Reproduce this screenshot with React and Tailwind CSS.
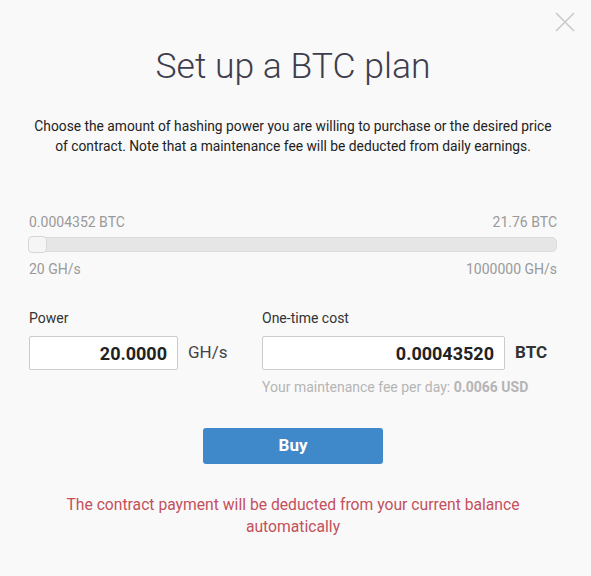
import React from 'react';

function App() {
  return (
    <div className="relative w-[591px] h-[576px] bg-[#f9f9f9] text-[#333] font-[Roboto,'Liberation_Sans',sans-serif]">
      {/* close */}
      <button className="absolute right-[16px] top-[12px] w-[20px] h-[20px] text-[#c8c8c8]">
        <svg width="20" height="20" viewBox="0 0 20 20" fill="none" stroke="currentColor" strokeWidth="1.5">
          <path d="M1 1L19 19M19 1L1 19" />
        </svg>
      </button>

      <div className="flex flex-col pl-[29px] pr-[34px] pt-[42px]">
        <h2 className="text-center text-[35.5px] leading-[48px] font-light text-[#3d3d4c]">Set up a BTC plan</h2>

        <p className="mt-[26px] text-center text-[13.8px] leading-[20px] text-[#222]">
          Choose the amount of hashing power you are willing to purchase or the desired price of contract. Note that a maintenance fee will be deducted from daily earnings.
        </p>

        {/* slider */}
        <div className="mt-[57px] flex flex-col">
          <div className="flex justify-between text-[14px] leading-[18px] text-[#999]">
            <span>0.0004352 BTC</span>
            <span>21.76 BTC</span>
          </div>
          <div className="relative mt-[6px] h-[15px] rounded-[5px] border border-[#dcdcdc] bg-[#e6e6e6]">
            <div className="absolute left-[-2px] top-[-2px] w-[19px] h-[17px] rounded-[4px] border border-[#d6d6d6] bg-[#f5f5f5]" />
          </div>
          <div className="mt-[8px] flex justify-between text-[14px] leading-[18px] text-[#999]">
            <span>20 GH/s</span>
            <span>1000000 GH/s</span>
          </div>
        </div>

        {/* inputs */}
        <div className="mt-[31px] flex">
          <div className="flex flex-col w-[233px]">
            <label className="text-[14px] leading-[18px] text-[#333]">Power</label>
            <div className="mt-[9px] flex items-center">
              <div className="w-[149px] h-[34px] border border-[#ccc] bg-white rounded-[2px] flex items-center justify-end pr-[10px] text-[18px] font-bold text-[#222]">20.0000</div>
              <span className="ml-[10px] text-[17px] text-[#444]">GH/s</span>
            </div>
          </div>
          <div className="flex flex-col">
            <label className="text-[14px] leading-[18px] text-[#333]">One-time cost</label>
            <div className="mt-[9px] flex items-center">
              <div className="w-[243px] h-[34px] border border-[#ccc] bg-white rounded-[2px] flex items-center justify-end pr-[10px] text-[18px] font-bold text-[#222]">0.00043520</div>
              <span className="ml-[10px] text-[17px] font-bold text-[#333]">BTC</span>
            </div>
            <p className="mt-[8px] text-[14px] leading-[18px] text-[#b5b5b5] whitespace-nowrap">
              Your maintenance fee per day: <span className="font-bold">0.0066 USD</span>
            </p>
          </div>
        </div>

        <div className="mt-[32px] flex justify-center">
          <button className="w-[180px] h-[36px] rounded-[3px] bg-[#3f88c9] text-white text-[17px] font-bold">Buy</button>
        </div>

        <p className="mt-[30px] px-[30px] text-center text-[15.7px] leading-[22px] text-[#c4505c]">
          The contract payment will be deducted from your current balance automatically
        </p>
      </div>
    </div>
  );
}

export default App;
